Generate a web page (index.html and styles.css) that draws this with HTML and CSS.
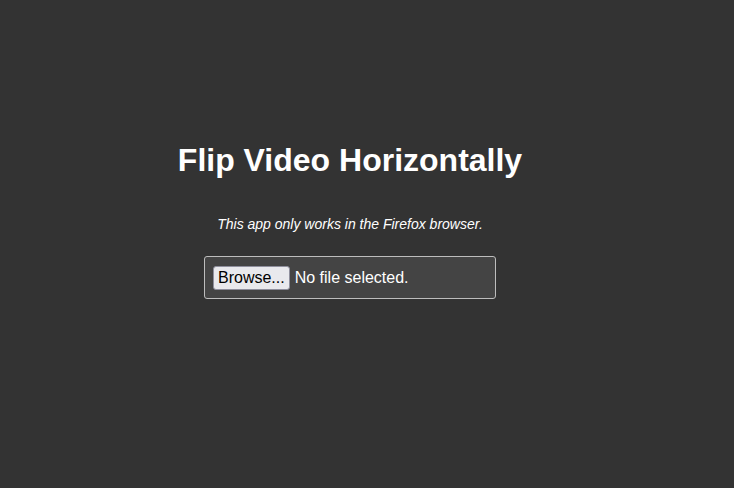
FILE: index.html
```html
<!DOCTYPE html>
<html>
<head>
<meta charset="utf-8">
<link rel="stylesheet" href="styles.css">
</head>
<body>
<main class="app">
  <h1 class="title">Flip Video Horizontally</h1>
  <p class="note">This app only works in the Firefox browser.</p>
  <label class="picker">
    <span class="browse">Browse...</span>
    <span class="status">No file selected.</span>
  </label>
</main>
</body>
</html>
```

FILE: styles.css
```css
html, body {
  margin: 0;
  background: #333333;
  color: #ffffff;
  font-family: "Liberation Sans", Arial, sans-serif;
}
.app {
  width: 700px;
  padding-top: 142px;
  display: flex;
  flex-direction: column;
  align-items: center;
}
.title {
  margin: 0;
  font-size: 32px;
  font-weight: bold;
  line-height: 37px;
}
.note {
  margin: 37px 0 0;
  font-size: 14px;
  font-style: italic;
  line-height: 16px;
}
.picker {
  margin-top: 24px;
  box-sizing: border-box;
  width: 292px;
  height: 43px;
  border: 1px solid #bdbdbd;
  border-radius: 3px;
  background: #444444;
  display: flex;
  align-items: center;
  padding-left: 8px;
  gap: 5px;
}
.browse {
  font-family: "Liberation Sans", Arial, sans-serif;
  font-size: 16px;
  color: #000;
  background: #e9e9ed;
  border: 1px solid #8f8f9d;
  border-radius: 3px;
  padding: 2px 4px;
  line-height: 18px;
}
.status {
  font-size: 16px;
}
```
